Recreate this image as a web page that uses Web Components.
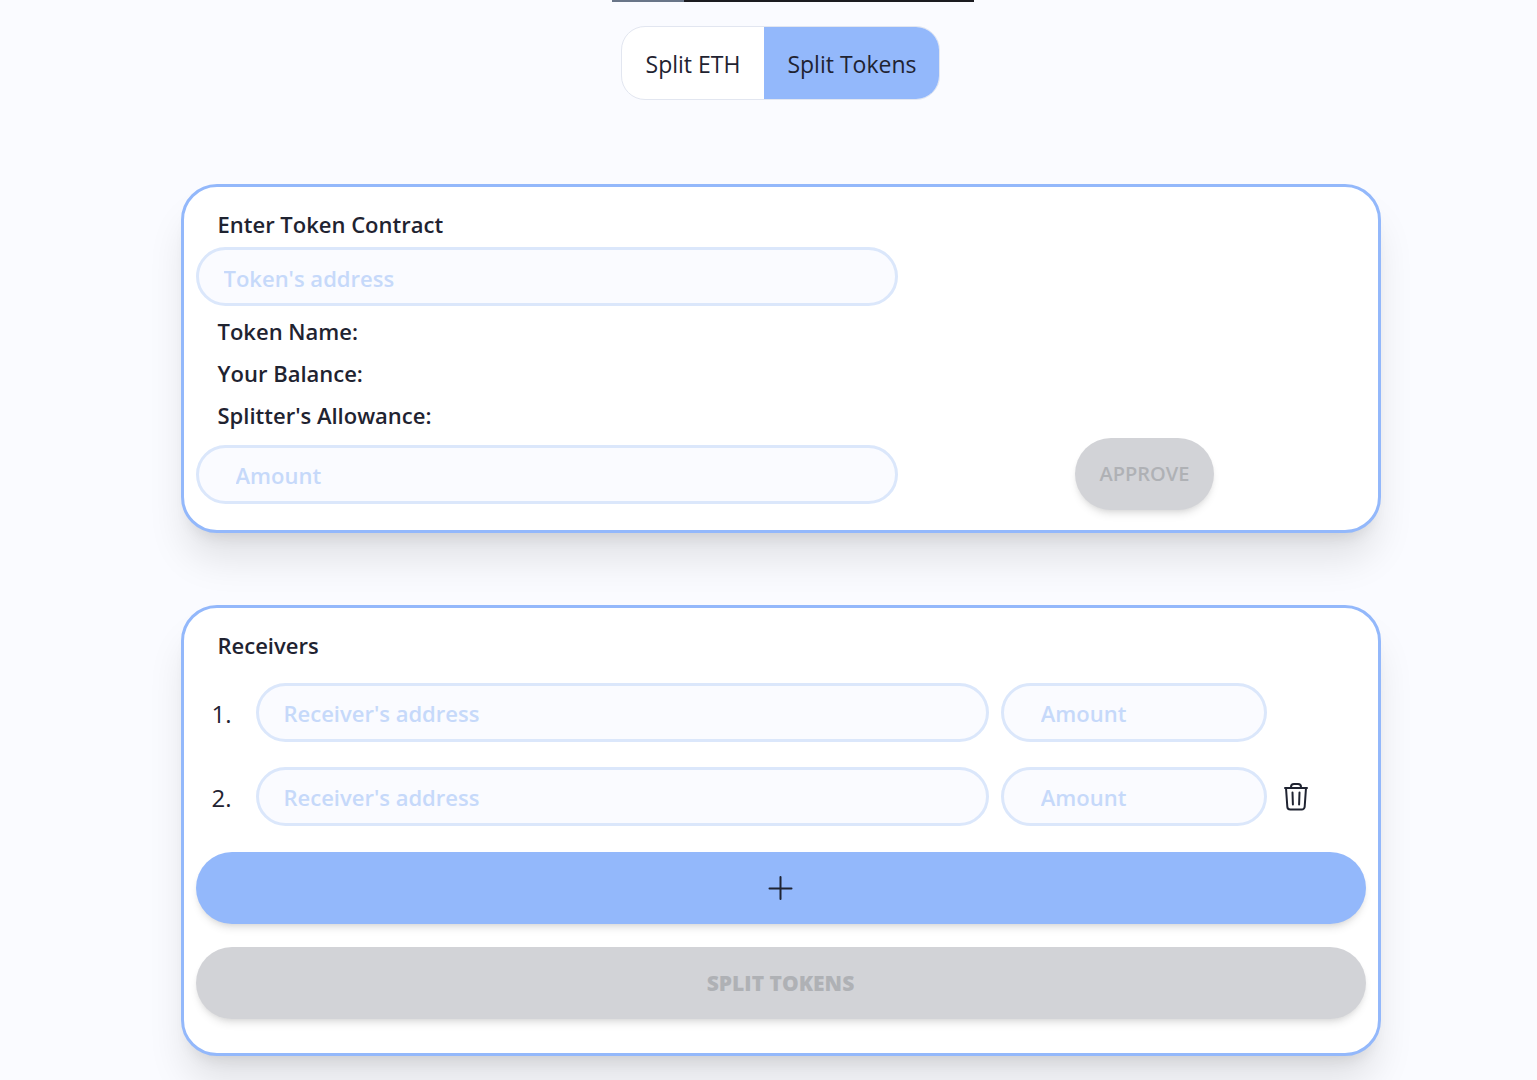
<!DOCTYPE html>
<html lang="en">
<head>
<meta charset="utf-8">
<title>Splitter</title>
<style>
  :root {
    --page: #fafbff;
    --blue: #93b8fb;
    --ink: #1f2331;
    --line: #dbe7fb;
    --hint: #c6d9fa;
    --off: #d2d3d7;
    --off-ink: #afb1b5;
  }
  * { box-sizing: border-box; }
  body {
    margin: 0;
    background: var(--page);
    color: var(--ink);
    font: 400 23px/36px "Open Sans", "Noto Sans", sans-serif;
  }
</style>
</head>
<body>
<splitter-app></splitter-app>

<template id="app">
  <style>
    :host { display: block; padding: 0 0 24px 24px; }
    main { width: 1200px; max-width: 80%; min-width: 720px; margin: 84px auto 0; display: grid; gap: 72px; }
    .label { font-size: 22px; font-weight: 600; line-height: 34px; padding: 0 0 2px 22px; margin: 0; }
    .contract text-field { width: 60%; }
    .contract .address { margin-top: 4px; }
    .facts { margin: 5px 0 1px; padding: 0; list-style: none; }
    .facts li { line-height: 40px; }
    .allow { display: flex; align-items: center; gap: 26px; }
    .allow div { flex: 1; display: flex; justify-content: center; }
    ol { list-style: none; margin: 12px 0 20px; padding: 0; display: grid; gap: 12px; }
    .actions { display: grid; gap: 23px; padding-bottom: 14px; }
    svg { display: block; }
  </style>
  <top-strip></top-strip>
  <mode-tabs></mode-tabs>
  <main>
    <panel-card class="contract">
      <h2 class="label">Enter Token Contract</h2>
      <text-field class="address" hint="Token's address"></text-field>
      <ul class="facts">
        <li class="label">Token Name:</li>
        <li class="label">Your Balance:</li>
        <li class="label">Splitter's Allowance:</li>
      </ul>
      <div class="allow">
        <text-field hint="Amount" inset></text-field>
        <div><pill-button disabled>APPROVE</pill-button></div>
      </div>
    </panel-card>
    <panel-card>
      <h2 class="label">Receivers</h2>
      <ol>
        <li><receiver-row number="1"></receiver-row></li>
        <li><receiver-row number="2" removable></receiver-row></li>
      </ol>
      <div class="actions">
        <pill-button label="Add receiver">
          <svg width="26" height="26" viewBox="0 0 26 26" fill="none" stroke="currentColor" stroke-width="2" stroke-linecap="round"><path d="M12.500 2v22M1.500 13.500h22"/></svg>
        </pill-button>
        <pill-button disabled heavy>SPLIT TOKENS</pill-button>
      </div>
    </panel-card>
  </main>
</template>

<template id="strip">
  <style>
    :host { display: flex; justify-content: center; height: 2px; padding-left: 24px; }
    i { width: 72px; background: #697588; }
    b { width: 290px; background: #1b1b20; }
  </style>
  <i></i><b></b>
</template>

<template id="tabs">
  <style>
    :host { display: flex; justify-content: center; margin-top: 24px; }
    div { box-sizing: border-box; display: flex; height: 74px; border: 1px solid #e2e6f0; border-radius: 24px; overflow: hidden; background: #fff; }
    button { border: 0; margin: 0; padding: 2px 24px 0; font: inherit; color: inherit; background: none; cursor: pointer; }
    button[aria-selected="true"] { background: var(--blue); padding: 2px 23px 0; }
  </style>
  <div role="tablist">
    <button role="tab" aria-selected="false">Split ETH</button>
    <button role="tab" aria-selected="true">Split Tokens</button>
  </div>
</template>

<template id="card">
  <style>
    :host {
      display: block; box-sizing: border-box; padding: 20px 12px; background: #fff;
      border: 3px solid var(--blue); border-radius: 36px;
      box-shadow: 0 30px 38px -4px rgb(0 0 0 / .1), 0 12px 15px -9px rgb(0 0 0 / .1);
    }
  </style>
  <slot></slot>
</template>

<template id="field">
  <style>
    :host { display: block; }
    input {
      display: block; box-sizing: border-box; width: 100%; height: 59px; margin: 0; padding: 2px 25px 0;
      border: 3px solid var(--line); border-radius: 30px; background: var(--page);
      font: 600 22px/36px "Open Sans", "Noto Sans", sans-serif; color: var(--ink); outline: none;
    }
    :host([inset]) input { padding-left: 37px; }
    input::placeholder { color: var(--hint); opacity: 1; }
  </style>
  <input type="text">
</template>

<template id="row">
  <style>
    :host { display: grid; grid-template-columns: 48px 11fr 4fr 86px; column-gap: 12px; align-items: center; height: 72px; }
    span { text-align: right; padding: 4px 12px 0 0; font-size: 24px; }
    button { justify-self: start; display: block; border: 0; margin: 0; padding: 0; background: none; color: inherit; cursor: pointer; }
    :host(:not([removable])) button { display: none; }
    svg { display: block; }
  </style>
  <span></span>
  <text-field hint="Receiver's address"></text-field>
  <text-field hint="Amount" inset></text-field>
  <button aria-label="Remove receiver">
    <svg width="34" height="34" viewBox="0 0 34 34" fill="none" stroke="currentColor" stroke-width="2" stroke-linecap="round" stroke-linejoin="round">
      <path d="M6 9h22M12 9v-1a3 3 0 0 1 3-3h4a3 3 0 0 1 3 3v1M7 9l1.300 18.500a3 3 0 0 0 3 3h11.400a3 3 0 0 0 3-3l1.300-18.500M13.500 13.500l.4 12M20.500 13.500l-.4 12"/>
    </svg>
  </button>
</template>

<template id="pill">
  <style>
    :host { display: block; }
    button {
      display: flex; align-items: center; justify-content: center; width: 100%; height: 72px; margin: 0; padding: 0 25px;
      border: 0; border-radius: 36px; background: var(--blue); color: var(--ink);
      font: 600 20px/36px "Open Sans", "Noto Sans", sans-serif; cursor: pointer;
      box-shadow: 0 6px 9px -2px rgb(0 0 0 / .1), 0 3px 6px -3px rgb(0 0 0 / .1);
    }
    button:disabled { background: var(--off); color: var(--off-ink); cursor: default; }
    :host([heavy]) button { font-size: 21px; font-weight: 800; }
  </style>
  <button><slot></slot></button>
</template>

<script>
  class Part extends HTMLElement {
    constructor() {
      super();
      this.attachShadow({ mode: "open" });
      this.shadowRoot.append(document.getElementById(this.constructor.view).content.cloneNode(true));
    }
    find(selector) { return this.shadowRoot.querySelector(selector); }
  }
  class TopStrip extends Part { static view = "strip"; }
  class PanelCard extends Part { static view = "card"; }
  class ModeTabs extends Part {
    static view = "tabs";
    connectedCallback() {
      const tabs = [...this.shadowRoot.querySelectorAll("button")];
      tabs.forEach(tab => tab.onclick = () => tabs.forEach(t => t.setAttribute("aria-selected", t === tab)));
    }
  }
  class TextField extends Part {
    static view = "field";
    connectedCallback() {
      const input = this.find("input");
      input.placeholder = this.getAttribute("hint");
      input.setAttribute("aria-label", this.getAttribute("hint"));
    }
  }
  class PillButton extends Part {
    static view = "pill";
    connectedCallback() {
      const button = this.find("button");
      button.disabled = this.hasAttribute("disabled");
      if (this.hasAttribute("label")) button.setAttribute("aria-label", this.getAttribute("label"));
    }
  }
  class ReceiverRow extends Part {
    static view = "row";
    connectedCallback() {
      this.find("span").textContent = this.getAttribute("number") + ".";
      this.find("button").onclick = () => this.parentElement.remove();
    }
  }
  class SplitterApp extends Part { static view = "app"; }

  customElements.define("top-strip", TopStrip);
  customElements.define("panel-card", PanelCard);
  customElements.define("mode-tabs", ModeTabs);
  customElements.define("text-field", TextField);
  customElements.define("pill-button", PillButton);
  customElements.define("receiver-row", ReceiverRow);
  customElements.define("splitter-app", SplitterApp);
</script>
</body>
</html>
